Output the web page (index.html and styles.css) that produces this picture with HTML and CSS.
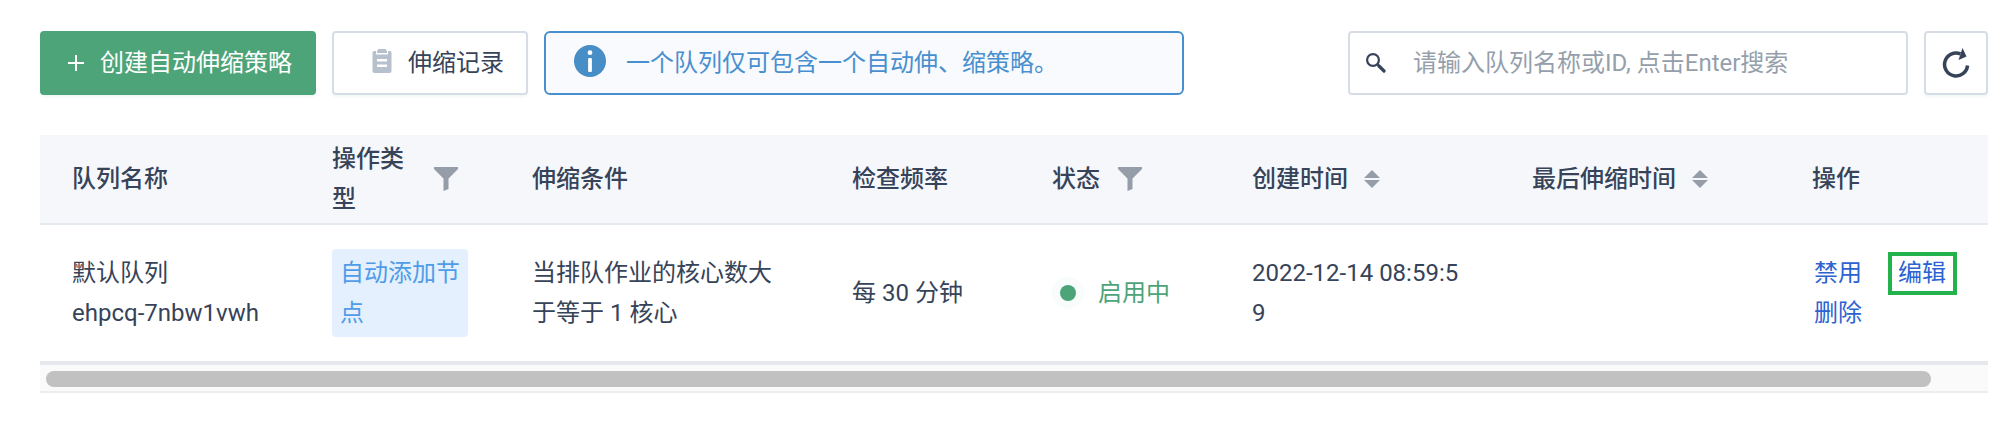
FILE: index.html
```html
<!DOCTYPE html>
<html lang="zh-CN">
<head>
<meta charset="utf-8">
<title>自动伸缩策略</title>
<link rel="stylesheet" href="styles.css">
</head>
<body>
<div class="toolbar">
  <button class="btn btn-primary">
    <svg class="plus" viewBox="0 0 16 16"><path d="M8 0v16M0 8h16"/></svg>
    <span>创建自动伸缩策略</span>
  </button>
  <button class="btn btn-default">
    <svg class="clip" viewBox="0 0 20 24"><path fill-rule="evenodd" d="M2 2h2v3.500h12V2h2a1.500 1.500 0 0 1 1.500 1.500V22a2 2 0 0 1-2 2H2.500a2 2 0 0 1-2-2V3.500A1.500 1.500 0 0 1 2 2zM5 10v2.500h10V10zM5 15.500V18h10v-2.500z"/><path d="M6 0h8v1.500h1V4H5V1.500h1z"/></svg>
    <span>伸缩记录</span>
  </button>
  <div class="alert">
    <svg class="info" viewBox="0 0 32 32"><circle cx="16" cy="16" r="16"/><circle class="mark" cx="16" cy="7.700" r="2.400"/><rect class="mark" x="14.100" y="13" width="3.800" height="14" rx="1"/></svg>
    <span>一个队列仅可包含一个自动伸、缩策略。</span>
  </div>
  <div class="search">
    <svg class="magnifier" viewBox="0 0 20 20"><circle cx="7" cy="7" r="5.900"/><path d="M11.200 11.200l1.500 1.500"/><path class="handle" d="M13 13l5 5"/></svg>
    <input type="text" placeholder="请输入队列名称或ID, 点击Enter搜索">
  </div>
  <button class="btn refresh" aria-label="刷新">
    <svg viewBox="0 0 28 30"><path class="arc" d="M18.500 5.900A11.500 11.500 0 1 0 25.500 17.500"/><path class="head" d="M20.500 0l4 8.500-8 3.500z"/></svg>
  </button>
</div>

<div class="table">
  <div class="row head-row">
    <div class="cell">队列名称</div>
    <div class="cell with-icon spread"><span class="narrow">操作类型</span><svg class="funnel" viewBox="0 0 24 24"><path d="M0 0h24v2l-9.500 9.500v10.500L9.500 24V11.500L0 2z"/></svg></div>
    <div class="cell">伸缩条件</div>
    <div class="cell">检查频率</div>
    <div class="cell with-icon"><span>状态</span><svg class="funnel" viewBox="0 0 24 24"><path d="M0 0h24v2l-9.500 9.500v10.500L9.500 24V11.500L0 2z"/></svg></div>
    <div class="cell with-icon"><span>创建时间</span><svg class="sorter" viewBox="0 0 16 18"><path d="M8 0l8 8H0zM8 18l8-8H0z"/></svg></div>
    <div class="cell with-icon"><span>最后伸缩时间</span><svg class="sorter" viewBox="0 0 16 18"><path d="M8 0l8 8H0zM8 18l8-8H0z"/></svg></div>
    <div class="cell">操作</div>
  </div>
  <div class="row body-row">
    <div class="cell">默认队列<br>ehpcq-7nbw1vwh</div>
    <div class="cell"><div class="tag">自动添加节点</div></div>
    <div class="cell">当排队作业的核心数大于等于 1 核心</div>
    <div class="cell">每 30 分钟</div>
    <div class="cell status"><i class="dot"></i><span>启用中</span></div>
    <div class="cell time">2022-12-14 08:59:59</div>
    <div class="cell"></div>
    <div class="cell actions"><a>禁用</a><a class="marked">编辑</a><a>删除</a></div>
  </div>
  <div class="scrollbar"><div class="thumb"></div></div>
</div>
</body>
</html>
```

FILE: styles.css
```css
* { box-sizing: border-box; }

body {
  margin: 0;
  padding: 31px 28px 0 40px;
  background: #fff;
  color: #364358;
  font: 24px/40px Roboto, "Noto Sans CJK SC", sans-serif;
}

svg { display: block; flex: none; fill: currentColor; }

.toolbar { display: flex; height: 64px; }

.btn {
  display: flex;
  align-items: center;
  margin: 0;
  padding: 0;
  border: 2px solid #d7dde7;
  border-radius: 4px;
  background: #fff;
  color: inherit;
  font: inherit;
  white-space: nowrap;
  box-shadow: 0 2px 2px rgba(78, 164, 121, 0.08);
}

.btn-primary {
  width: 276px;
  padding-left: 26px;
  border-color: #4ea479;
  background: #4ea479;
  color: #fff;
}

.plus { width: 16px; height: 16px; margin-right: 16px; fill: none; stroke: #fff; stroke-width: 2; }

.btn-default { width: 196px; margin-left: 16px; padding-left: 38px; }
.clip { width: 20px; height: 24px; margin: 0 16px 4px 0; color: #b7c1cd; }

.alert {
  display: flex;
  align-items: center;
  width: 640px;
  margin-left: 16px;
  padding-left: 28px;
  border: 2px solid #488fcf;
  border-radius: 6px;
  background: #f8fafd;
  color: #488fcf;
}
.info { width: 32px; height: 32px; margin: 0 20px 4px 0; color: #478dc6; }
.info .mark { fill: #fff; }

.search {
  display: flex;
  align-items: center;
  width: 560px;
  margin-left: auto;
  padding-left: 16px;
  border: 2px solid #d7dde7;
  border-radius: 4px;
}
.magnifier { width: 20px; height: 20px; margin-right: 27px; fill: none; stroke: #364358; stroke-width: 2.2; }
.magnifier .handle { stroke-width: 3.2; stroke-linecap: round; }
.search input {
  flex: 1;
  min-width: 0;
  padding: 0;
  border: 0;
  outline: 0;
  background: none;
  font: inherit;
}
.search input::placeholder { color: #959fac; opacity: 1; }

.refresh { width: 64px; margin-left: 16px; justify-content: center; }
.refresh svg { width: 28px; height: 30px; }
.refresh .arc { fill: none; stroke: #364358; stroke-width: 3.5; }

.table { margin-top: 40px; }

.row {
  display: grid;
  grid-template-columns: 260px 200px 320px 200px 200px 280px 280px 208px;
  align-items: center;
}
.cell { padding: 0 32px; }

.head-row {
  height: 90px;
  border-bottom: 2px solid #e5eaf0;
  background: #f5f7fb;
  font-weight: 500;
}
.with-icon { display: flex; align-items: center; }
.spread { justify-content: space-between; padding-right: 42px; }
.narrow { width: 72px; }
.funnel { width: 24px; height: 24px; color: #959da8; }
.cell:not(.spread) > .funnel { margin-left: 18px; }
.sorter { width: 16px; height: 18px; margin-left: 16px; color: #959da8; }

.body-row { height: 140px; border-bottom: 4px solid #e5e9ed; }

.tag {
  width: 136px;
  margin: 0;
  padding: 4px 8px;
  border-radius: 4px;
  background: #e4f0fd;
  color: #509ce8;
}

.status { display: flex; align-items: center; color: #4ea479; white-space: nowrap; }
.dot {
  width: 16px;
  height: 16px;
  margin: 0 22px 0 8px;
  border-radius: 50%;
  background: #4ea479;
  box-shadow: 0 0 0 8px #f8fcfa;
}

.time { padding-right: 40px; word-break: break-all; }

.actions {
  display: grid;
  grid-template-columns: 48px 48px;
  column-gap: 36px;
  padding-left: 34px;
  color: #2b63d1;
  white-space: nowrap;
}
.marked { position: relative; }
.marked::after {
  content: "";
  position: absolute;
  inset: -1px -11px -2px -10px;
  border: 4px solid #23b24c;
}

.scrollbar {
  height: 28px;
  padding: 6px;
  border-bottom: 2px solid #ededed;
  background: #fafafa;
}
.thumb { width: 1885px; height: 16px; border-radius: 8px; background: #c1c1c1; }
```
